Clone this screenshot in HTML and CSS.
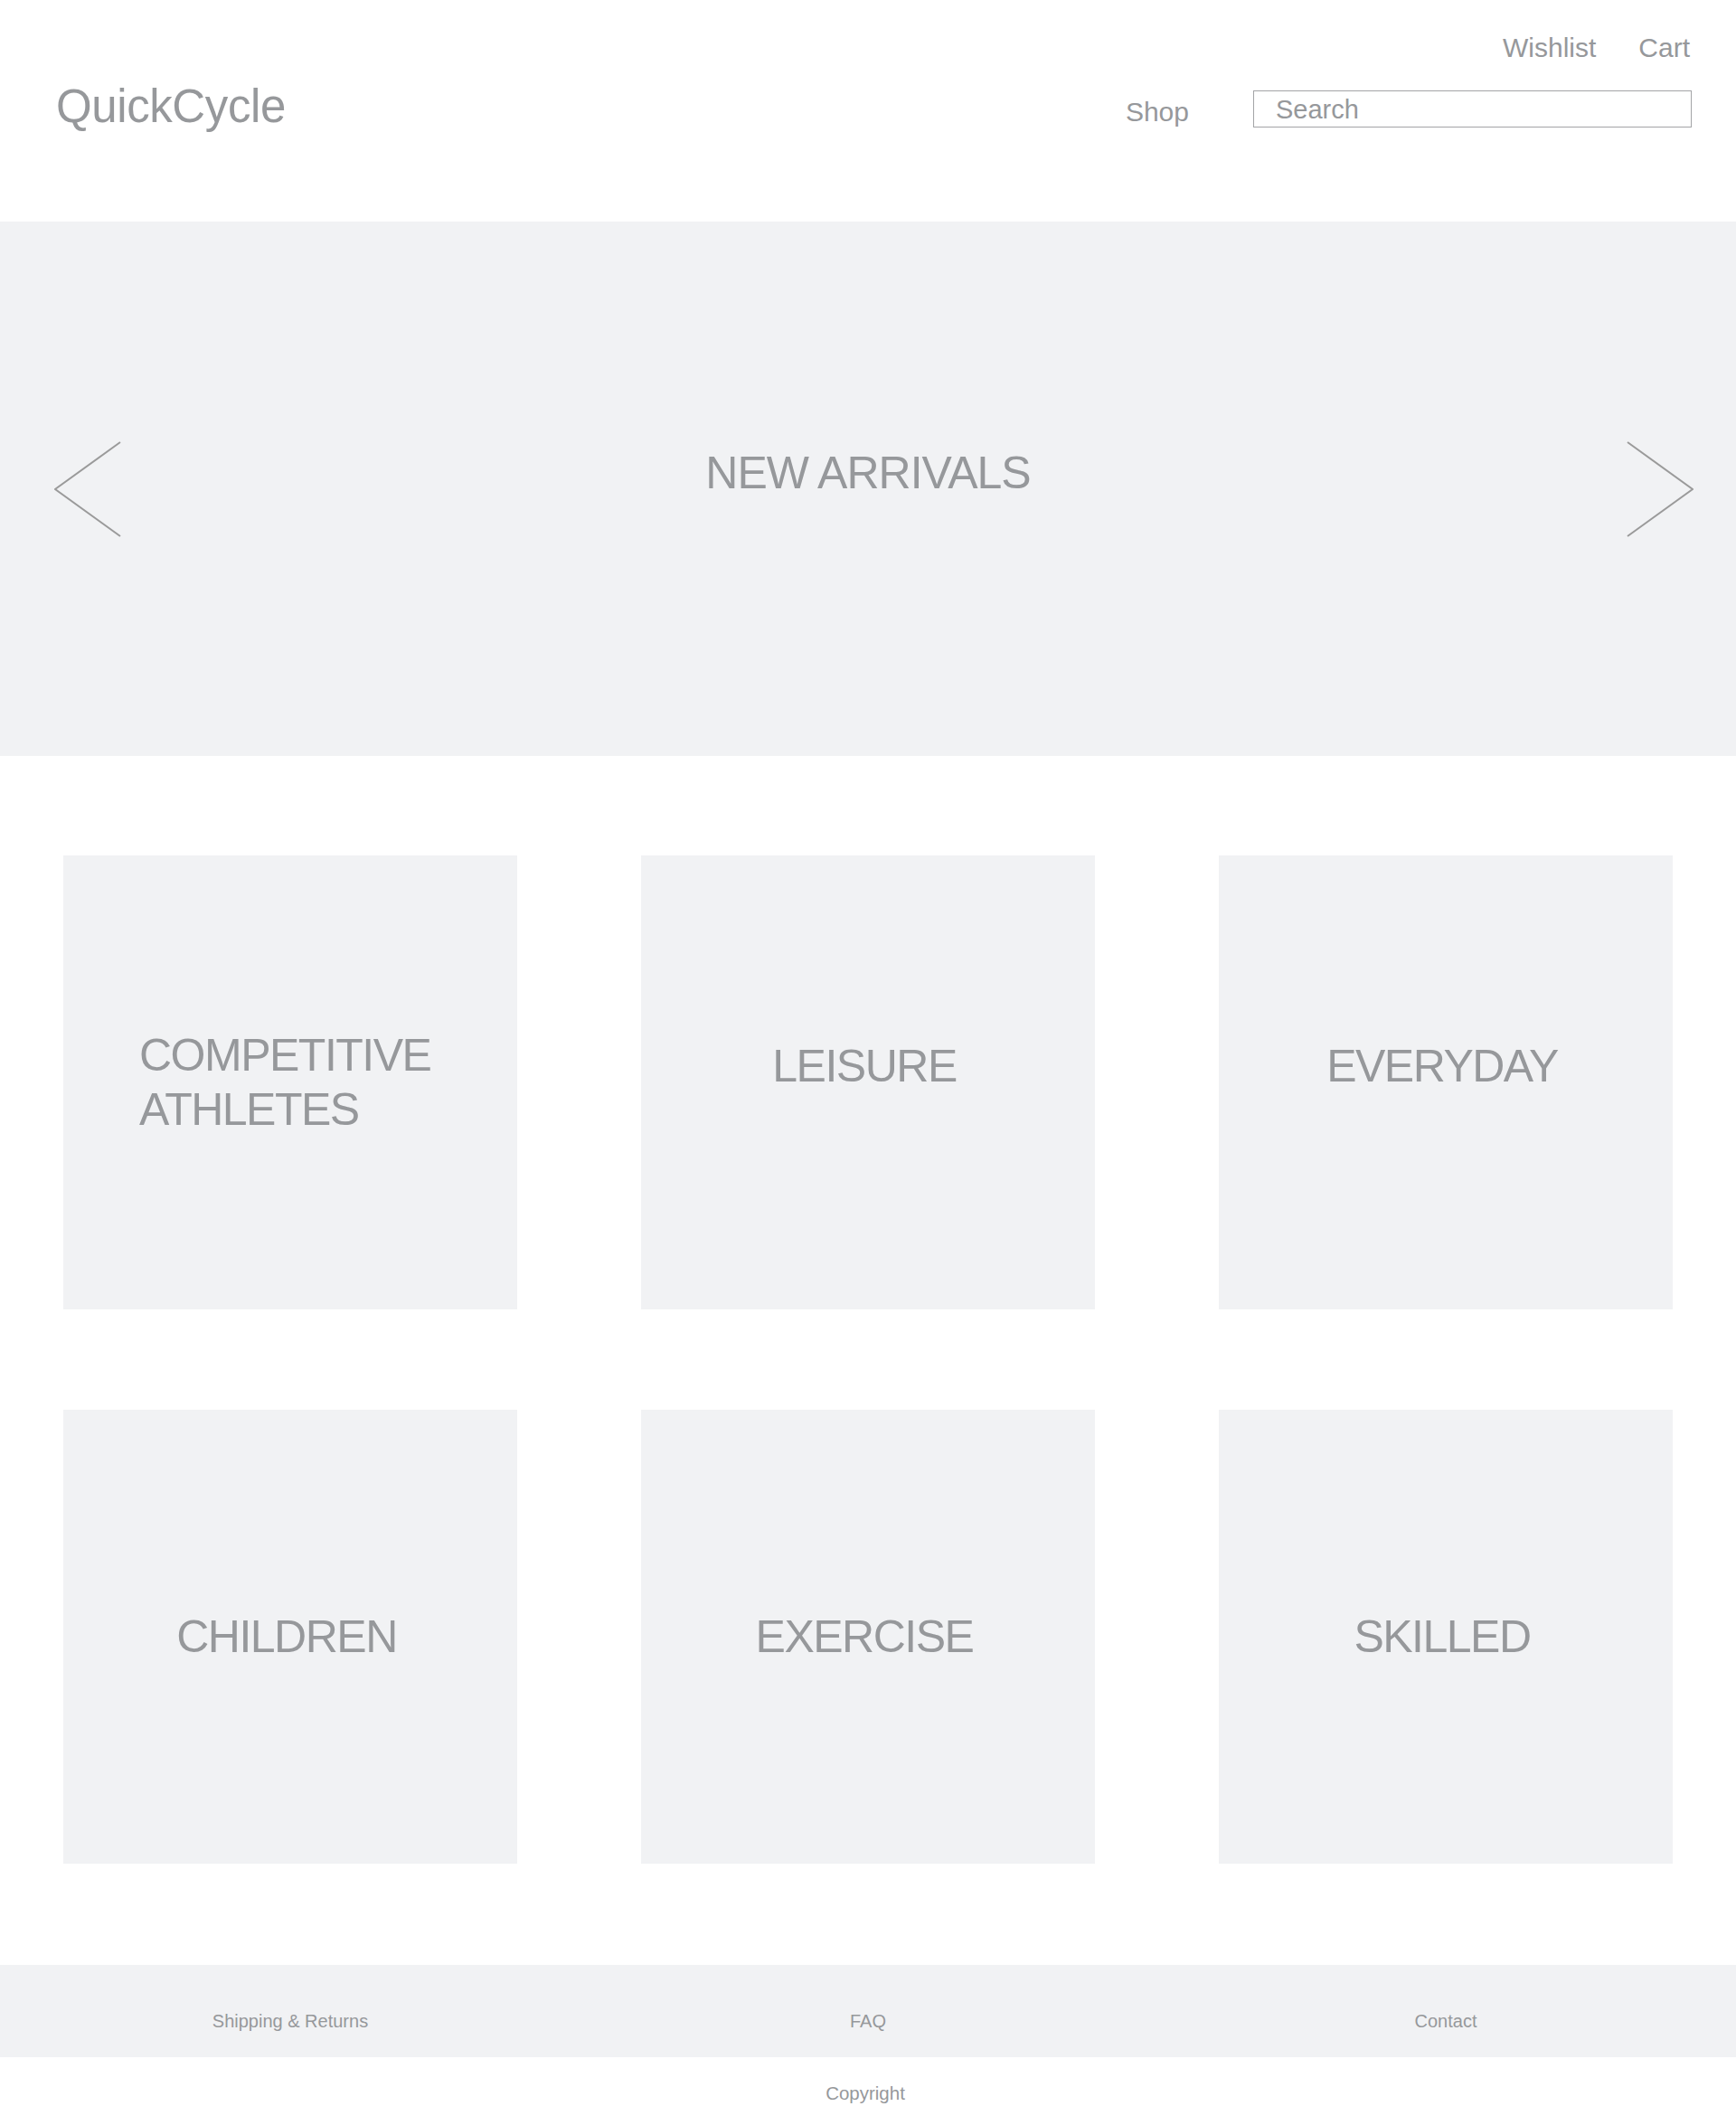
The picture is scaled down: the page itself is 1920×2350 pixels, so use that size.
FILE: index.html
```html
<!DOCTYPE html>
<html lang="en">
<head>
<meta charset="utf-8">
<title>QuickCycle</title>
<link rel="stylesheet" href="styles.css">
</head>
<body>
<header class="site-header">
  <div class="logo">QuickCycle</div>
  <div class="header-right">
    <nav class="util-nav">
      <a href="#">Wishlist</a>
      <a href="#">Cart</a>
    </nav>
    <div class="main-nav">
      <a href="#" class="shop">Shop</a>
      <div class="search">Search</div>
    </div>
  </div>
</header>

<section class="hero">
  <a href="#" class="arrow arrow-prev" aria-label="Previous">
    <svg width="74" height="106" viewBox="0 0 74 106"><polyline points="73,1 1,53 73,105" fill="none" stroke="#9a9a9a" stroke-width="2"/></svg>
  </a>
  <h1 class="hero-title">NEW ARRIVALS</h1>
  <a href="#" class="arrow arrow-next" aria-label="Next">
    <svg width="74" height="106" viewBox="0 0 74 106"><polyline points="1,1 73,53 1,105" fill="none" stroke="#9a9a9a" stroke-width="2"/></svg>
  </a>
</section>

<main class="categories">
  <a href="#" class="tile tile-left"><h2 class="tile-label">COMPETITIVE<br>ATHLETES</h2></a>
  <a href="#" class="tile tile-raised"><h2 class="tile-label">LEISURE</h2></a>
  <a href="#" class="tile tile-raised"><h2 class="tile-label">EVERYDAY</h2></a>
  <a href="#" class="tile"><h2 class="tile-label">CHILDREN</h2></a>
  <a href="#" class="tile"><h2 class="tile-label">EXERCISE</h2></a>
  <a href="#" class="tile"><h2 class="tile-label">SKILLED</h2></a>
</main>

<footer class="site-footer">
  <nav class="footer-links">
    <a href="#">Shipping &amp; Returns</a>
    <a href="#">FAQ</a>
    <a href="#">Contact</a>
  </nav>
  <p class="copyright">Copyright</p>
</footer>
</body>
</html>
```
FILE: styles.css
```css
* {
  box-sizing: border-box;
}

html, body {
  margin: 0;
  padding: 0;
  background: #ffffff;
}

body {
  font-family: "Liberation Sans", Arial, Helvetica, sans-serif;
  color: #96989b;
}

a {
  color: inherit;
  text-decoration: none;
}

/* Header */
.site-header {
  height: 245px;
  display: flex;
  justify-content: space-between;
  align-items: flex-start;
  padding: 0 49px 0 62px;
}

.logo {
  margin-top: 92px;
  font-size: 51px;
  line-height: 51px;
  letter-spacing: -0.4px;
}

.header-right {
  margin-top: 38px;
  display: flex;
  flex-direction: column;
  align-items: flex-end;
}

.util-nav {
  display: flex;
  gap: 47px;
  margin-right: 2px;
  font-size: 30px;
  line-height: 30px;
}

.main-nav {
  margin-top: 32px;
  display: flex;
  align-items: flex-start;
}

.shop {
  margin-top: 9px;
  margin-right: 71px;
  font-size: 30px;
  line-height: 30px;
}

.search {
  width: 485px;
  height: 41px;
  border: 1px solid #a3a4a6;
  padding: 1px 0 0 24px;
  font-size: 29px;
  line-height: 38px;
}

/* Hero */
.hero {
  height: 591px;
  background: #f1f2f4;
  display: grid;
  grid-template-columns: 1fr auto 1fr;
  align-items: center;
  padding: 0 47px;
}

.arrow {
  display: flex;
}

.arrow svg {
  display: block;
}

.arrow-prev {
  justify-self: start;
  margin-left: 13px;
}

.arrow-next {
  justify-self: end;
}

.hero-title {
  margin: 0 0 36px 0;
  font-size: 50px;
  line-height: 60px;
  font-weight: normal;
  letter-spacing: -1px;
}

/* Categories */
.categories {
  display: grid;
  grid-template-columns: repeat(3, 502px);
  column-gap: 137px;
  row-gap: 111px;
  padding: 110px 70px 112px;
}

.tile {
  height: 502px;
  background: #f1f2f4;
  display: flex;
  align-items: center;
  justify-content: center;
  padding-right: 8px;
}

.tile-label {
  margin: 0;
  font-size: 50px;
  line-height: 60px;
  font-weight: normal;
  letter-spacing: -1.5px;
}

.tile-left {
  justify-content: flex-start;
  padding-left: 84px;
}

.tile-raised .tile-label {
  margin-bottom: 36px;
}

/* Footer */
.footer-links {
  background: #f1f2f4;
  display: grid;
  grid-template-columns: repeat(3, 502px);
  column-gap: 137px;
  padding: 52px 70px 30px;
  font-size: 20px;
  line-height: 20px;
  text-align: center;
}

.copyright {
  margin: 0;
  padding: 30px 6px 25px 0;
  text-align: center;
  font-size: 20.5px;
  line-height: 20px;
}
```
